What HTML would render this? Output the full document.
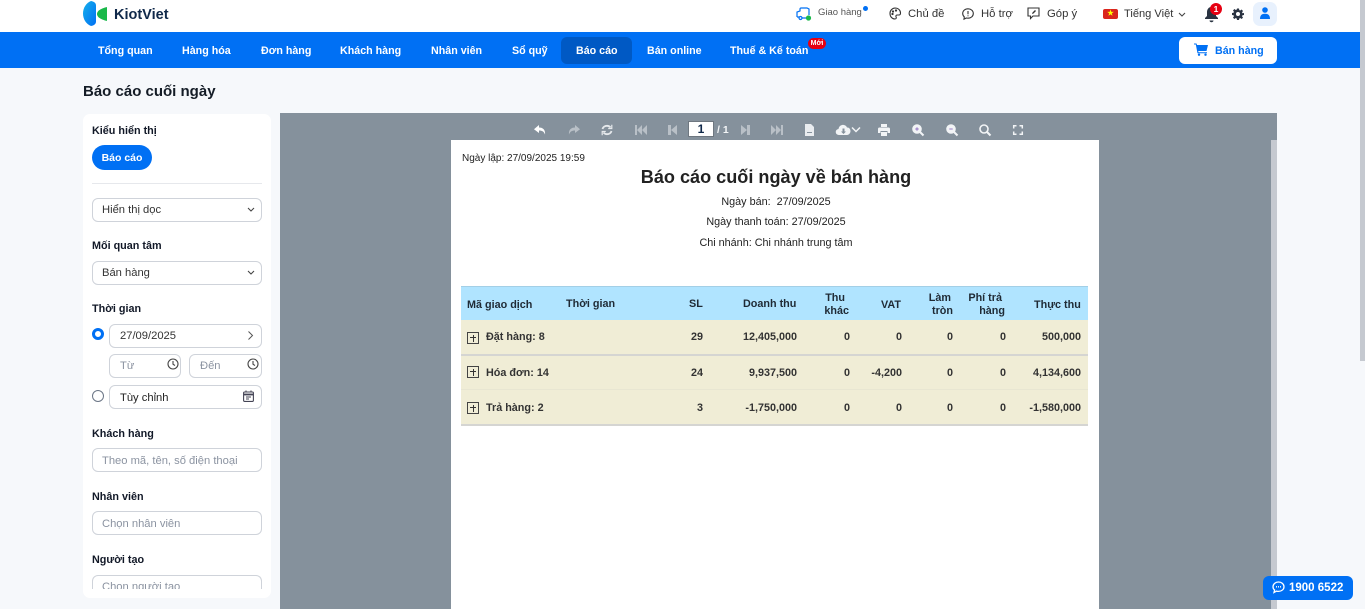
<!DOCTYPE html>
<html><head><meta charset="utf-8"><style>
*{box-sizing:border-box}
html,body{margin:0;padding:0;width:1365px;height:609px;overflow:hidden;background:#f6f8fb;font-family:"Liberation Sans","Noto Sans CJK SC",sans-serif;color:#1c2430}
.a{position:absolute;white-space:nowrap}
.nav{font-size:10.7px;font-weight:700;color:#fff;top:45px;line-height:13px}
.top{font-size:11.3px;color:#333;top:8px;line-height:13px}
.lab{font-size:10.8px;font-weight:700;color:#111827;left:92px;line-height:13px}
.inp{position:absolute;background:#fff;border:1px solid #cfd3da;border-radius:6px;height:24px;font-size:11.2px;line-height:23px;padding-left:9px;color:#333;white-space:nowrap;overflow:hidden}
.ph{color:#8b93a1}
.r{position:absolute;font-size:10.8px;line-height:13px;color:#333;text-align:right;white-space:nowrap;font-weight:700}
.h{color:#1f2a35}
.rowbg{position:absolute;left:461px;width:627px;background:#f0edd6}
.box{position:absolute;left:467px;width:12px;height:12px;border:1px solid #444}
.box:before{content:"";position:absolute;left:2px;top:4px;width:6px;height:1px;background:#333}
.box:after{content:"";position:absolute;left:4.500px;top:1.500px;width:1px;height:7px;background:#333}
svg{position:absolute;overflow:visible}
</style></head><body>
<!-- top bar -->
<div class="a" style="left:0;top:0;width:1365px;height:32px;background:#fff"></div>
<svg style="left:83px;top:1px" width="26" height="25" viewBox="0 0 26 25"><defs><linearGradient id="g" x1="0" y1="0" x2="1" y2="1"><stop offset="0" stop-color="#15b0ea"/><stop offset="1" stop-color="#0070f4"/></linearGradient></defs><path d="M8 0C3 2 0 7 0 12.500S3 23 8 25c3-.5 5-2 5-4.500V4.500C13 2 11 .5 8 0z" fill="url(#g)"/><path d="M24 6v14c-4-1-10-3-10-7s6-6 10-7z" fill="#19b84a"/></svg>
<div class="a" style="left:114px;top:7px;font-size:14.500px;line-height:17px;font-weight:700;color:#10294a">KiotViet</div>

<svg style="left:796px;top:7px" width="16" height="14" viewBox="0 0 16 14" fill="none" stroke="#0070f4" stroke-width="1.2"><path d="M1 10V5l3-1V2a1 1 0 011-1h6l2 1v6"/><path d="M1 10h2M6 11h4"/><circle cx="4.500" cy="11" r="1.500"/><circle cx="12.500" cy="11" r="2" fill="#19b84a" stroke="#19b84a"/></svg>
<div class="a" style="left:818px;top:7px;font-size:9.500px;line-height:12px;color:#555">Giao hàng</div>
<div class="a" style="left:863px;top:6px;width:5px;height:5px;border-radius:50%;background:#0070f4"></div>
<svg style="left:889px;top:7px" width="12" height="13" viewBox="0 0 12 13" fill="none" stroke="#333" stroke-width="1.100"><path d="M6 1a5.300 5.300 0 00-5 5.500C1 9.500 3 12 6 12c1.500 0 1.500-1.500 1-2.200-.5-1 .2-1.800 1.300-1.800H10c1 0 1.500-.8 1.500-2C11.500 3 9 1 6 1z"/><circle cx="4" cy="4.500" r=".6" fill="#333"/><circle cx="7" cy="3.500" r=".6" fill="#333"/><circle cx="3.500" cy="7" r=".6" fill="#333"/></svg>
<div class="a top" style="left:908px">Chủ đề</div>
<svg style="left:962px;top:8px" width="12" height="12" viewBox="0 0 12 12" fill="none" stroke="#333" stroke-width="1.100"><path d="M6 .8c3 0 5.300 2 5.300 4.700S9 10.200 6 10.200c-.6 0-1.200-.1-1.700-.2L2 11.200l.3-2.300C1.200 8 .7 6.800.7 5.500.7 2.800 3 .8 6 .8z"/><path d="M6 3v3.200M6 7.400v.9"/></svg>
<div class="a top" style="left:981px">Hỗ trợ</div>
<svg style="left:1027px;top:7px" width="13" height="13" viewBox="0 0 13 13" fill="none" stroke="#333" stroke-width="1.100"><path d="M1 1h11v8H6l-2.500 2.500V9H1z"/><path d="M5 7l.5-1.500L8 3l1 1-2.500 2.500z" fill="#333" stroke="none"/></svg>
<div class="a top" style="left:1047px">Góp ý</div>
<div class="a" style="left:1103px;top:9px;width:15px;height:10px;background:#da251d;border-radius:2px;color:#ff0;font-size:7px;line-height:10px;text-align:center">★</div>
<div class="a top" style="left:1124px;font-size:11.100px">Tiếng Việt</div>
<svg style="left:1178px;top:12px" width="8" height="5" viewBox="0 0 8 5" fill="none" stroke="#444" stroke-width="1.100"><path d="M1 1l3 3 3-3"/></svg>
<svg style="left:1204px;top:5px" width="15" height="18" viewBox="0 0 15 18" fill="#2a3342"><path d="M7.500 2C4.500 2 3 4.500 3 7v4l-2 2v1h13v-1l-2-2V7c0-2.500-1.500-5-4.500-5z"/><path d="M5.500 15.500h4c0 1-1 1.800-2 1.800s-2-.8-2-1.800z"/></svg>
<div class="a" style="left:1210px;top:3px;width:12px;height:12px;border-radius:50%;background:#e60012;color:#fff;font-size:8.500px;line-height:12px;text-align:center;font-weight:700">1</div>
<svg style="left:1232px;top:8px" width="12" height="12" viewBox="0 0 24 24" fill="#2a3342"><path fill-rule="evenodd" d="M10 1h4l.6 3.200 1.900.8 2.700-1.900 2.800 2.800-1.900 2.700.8 1.900L24 10v4l-3.100.6-.8 1.900 1.900 2.700-2.800 2.800-2.700-1.900-1.900.8L14 24h-4l-.6-3.100-1.900-.8-2.700 1.900L2 19.200l1.900-2.700-.8-1.900L0 14v-4l3.100-.5.8-1.900L2 4.900l2.800-2.800 2.700 1.900 1.900-.8zM12 8a4 4 0 100 8 4 4 0 000-8z"/></svg>
<div class="a" style="left:1253px;top:2px;width:24px;height:24px;border-radius:7px;background:#e8f1fd"></div>
<svg style="left:1260px;top:7px" width="10" height="12" viewBox="0 0 10 12" fill="#0070f4"><circle cx="5" cy="3" r="2.800"/><path d="M0 12c0-4 2-5.300 5-5.300S10 8 10 12z"/></svg>

<!-- nav -->
<div class="a" style="left:0;top:32px;width:1365px;height:36px;background:#0070f4"></div>
<div class="a" style="left:561px;top:37px;width:71px;height:27px;background:#0059c4;border-radius:6px"></div>
<div class="a nav" style="left:98px">Tổng quan</div>
<div class="a nav" style="left:182px">Hàng hóa</div>
<div class="a nav" style="left:261px">Đơn hàng</div>
<div class="a nav" style="left:340px">Khách hàng</div>
<div class="a nav" style="left:431px">Nhân viên</div>
<div class="a nav" style="left:512px">Sổ quỹ</div>
<div class="a nav" style="left:576px">Báo cáo</div>
<div class="a nav" style="left:647px">Bán online</div>
<div class="a nav" style="left:730px">Thuế &amp; Kế toán</div>
<div class="a" style="left:808px;top:38px;width:18px;height:11px;background:#e60012;border-radius:6px;color:#fff;font-size:7px;line-height:11px;text-align:center;font-weight:700">Mới</div>
<div class="a" style="left:1179px;top:37px;width:98px;height:27px;background:#fff;border-radius:6px"></div>
<svg style="left:1194px;top:43px" width="14" height="13" viewBox="0 0 14 13" fill="#0070f4"><path d="M0 .5h2.500l.5 1.500h11l-1.500 6H4.200l.3 1.200H13v1H3.500L1.800 1.500H0z"/><circle cx="5" cy="11.700" r="1.200"/><circle cx="11.500" cy="11.700" r="1.200"/></svg>
<div class="a nav" style="left:1215px;color:#0070f4">Bán hàng</div>

<div class="a" style="left:83px;top:83px;font-size:15px;line-height:18px;font-weight:700;color:#141c26">Báo cáo cuối ngày</div>

<!-- sidebar -->
<div class="a" style="left:83px;top:114px;width:188px;height:484px;background:#fff;border-radius:7px"></div>
<div class="a" style="left:83px;top:114px;width:188px;height:475px;overflow:hidden">
<div style="position:absolute;left:-83px;top:-114px;width:271px;height:589px">
<div class="a lab" style="top:125px">Kiểu hiển thị</div>
<div class="a" style="left:92px;top:145px;width:60px;height:25px;border-radius:13px;background:#0070f4;color:#fff;font-size:10.500px;font-weight:700;line-height:26px;text-align:center">Báo cáo</div>
<div class="a" style="left:92px;top:183px;width:170px;height:1px;background:#e6e8ec"></div>
<div class="inp" style="left:92px;top:198px;width:170px">Hiển thị dọc</div>
<svg style="left:247px;top:207px" width="8" height="5" viewBox="0 0 8 5" fill="none" stroke="#444" stroke-width="1.100"><path d="M1 1l3 3 3-3"/></svg>
<div class="a lab" style="top:240px">Mối quan tâm</div>
<div class="inp" style="left:92px;top:261px;width:170px">Bán hàng</div>
<svg style="left:247px;top:270px" width="8" height="5" viewBox="0 0 8 5" fill="none" stroke="#444" stroke-width="1.100"><path d="M1 1l3 3 3-3"/></svg>
<div class="a lab" style="top:303px">Thời gian</div>
<div class="a" style="left:92px;top:328px;width:12px;height:12px;border-radius:50%;border:3px solid #0070f4;background:#fff"></div>
<div class="inp" style="left:109px;top:324px;width:153px;padding-left:10px">27/09/2025</div>
<svg style="left:248px;top:331px" width="5" height="9" viewBox="0 0 5 9" fill="none" stroke="#555" stroke-width="1"><path d="M.5 .5l4 4-4 4"/></svg>
<div class="inp ph" style="left:109px;top:354px;width:72px;padding-left:10px">Từ</div>
<div class="inp ph" style="left:189px;top:354px;width:73px;padding-left:10px">Đến</div>
<svg style="left:167px;top:358px" width="12" height="12" viewBox="0 0 12 12" fill="none" stroke="#444" stroke-width="1.100"><circle cx="6" cy="6" r="5"/><path d="M6 3v3.200l2 1.300"/></svg>
<svg style="left:247px;top:358px" width="12" height="12" viewBox="0 0 12 12" fill="none" stroke="#444" stroke-width="1.100"><circle cx="6" cy="6" r="5"/><path d="M6 3v3.200l2 1.300"/></svg>
<div class="a" style="left:92px;top:390px;width:12px;height:12px;border-radius:50%;border:1px solid #6b7686;background:#fff"></div>
<div class="inp" style="left:109px;top:385px;width:153px;color:#222;line-height:24px;padding-left:10px">Tùy chỉnh</div>
<svg style="left:243px;top:390px" width="11" height="12" viewBox="0 0 11 12" fill="none" stroke="#445" stroke-width="1.100"><rect x=".6" y="2" width="9.800" height="9.400" rx="1"/><path d="M.6 4.500h9.800" stroke-width="1.800"/><path d="M3 .5v2M8 .5v2M3 7h5M3 9h3"/></svg>
<div class="a lab" style="top:428px">Khách hàng</div>
<div class="inp ph" style="left:92px;top:448px;width:170px;line-height:24px">Theo mã, tên, số điện thoại</div>
<div class="a lab" style="top:491px">Nhân viên</div>
<div class="inp ph" style="left:92px;top:511px;width:170px;line-height:24px">Chọn nhân viên</div>
<div class="a lab" style="top:554px">Người tạo</div>
<div class="inp ph" style="left:92px;top:575px;width:170px;height:14px;border-bottom:0;border-radius:6px 6px 0 0">Chọn người tạo</div>
</div></div>

<!-- viewer -->
<div class="a" style="left:280px;top:113px;width:997px;height:496px;background:#85919c"></div>
<div class="a" style="left:1271px;top:140px;width:6px;height:469px;background:#c5c9d0"></div>
<svg style="left:534px;top:124px" width="13" height="12" viewBox="0 0 13 12" fill="#fff"><path d="M5 1L0 5.200 5 9V6.500c3 0 5 1 6 4 .5-4-1.500-7-6-7z"/></svg>
<svg style="left:567px;top:124px" width="13" height="12" viewBox="0 0 13 12" fill="#b9c0c7"><path d="M8 1l5 4.200L8 9V6.500c-3 0-5 1-6 4-.5-4 1.500-7 6-7z"/></svg>
<svg style="left:601px;top:124px" width="12" height="12" viewBox="0 0 12 12" fill="none" stroke="#e6e9ec" stroke-width="1.800"><path d="M1.500 5C2 3 4 1.800 6 1.800c1.500 0 2.700.6 3.500 1.700M10.500 7C10 9 8 10.200 6 10.200c-1.500 0-2.700-.6-3.500-1.700"/><path d="M10.800 .8v3.700H7.200M1.200 11.200V7.500h3.600" stroke-width="1.200"/></svg>
<svg style="left:635px;top:125px" width="12" height="10" viewBox="0 0 12 10" fill="#b9c0c7"><path d="M0 0h2v10H0zM7 0v10L2 5zM12 0v10L7 5z"/></svg>
<svg style="left:668px;top:125px" width="9" height="10" viewBox="0 0 9 10" fill="#b9c0c7"><path d="M0 0h3v10H0zM9 0v10L3 5z"/></svg>
<div class="a" style="left:688px;top:121px;width:26px;height:16px;background:#fff;border:1px solid #6e7780;font-size:12px;font-weight:700;line-height:15px;text-align:center;color:#10294a">1</div>
<div class="a" style="left:717px;top:124px;font-size:10.500px;font-weight:700;line-height:13px;color:#f3f5f7">/ 1</div>
<svg style="left:741px;top:125px" width="9" height="10" viewBox="0 0 9 10" fill="#b9c0c7"><path d="M9 0H6v10h3zM0 0v10l6-5z"/></svg>
<svg style="left:771px;top:125px" width="12" height="10" viewBox="0 0 12 10" fill="#b9c0c7"><path d="M12 0h-2v10h2zM5 0v10l5-5zM0 0v10l5-5z"/></svg>
<svg style="left:805px;top:124px" width="9" height="12" viewBox="0 0 9 12" fill="#e9ecef"><path d="M0 0h6l3 3v9H0z"/><path d="M2 8h5v1H2z" fill="#85919c"/></svg>
<svg style="left:836px;top:124px" width="25" height="12" viewBox="0 0 25 12"><path d="M3 11a3 3 0 01-.5-6C3 2 5.500 .5 8 1c1.500.3 2.500 1.300 3 2.500 2-.3 3.500 1.500 3.500 3.500s-1.500 4-3.500 4z" fill="#f2f4f6"/><path d="M6.500 4.500h2v3H10L7.500 10 5 7.500h1.500z" fill="#85919c"/><path d="M16 3.500l4 4 4-4" fill="none" stroke="#f2f4f6" stroke-width="1.500"/></svg>
<svg style="left:878px;top:124px" width="12" height="12" viewBox="0 0 12 12" fill="#f2f4f6"><path d="M3 0h6v3H3zM1.500 3.500h9A1.500 1.500 0 0112 5v4H9.500V7h-7v2H0V5a1.500 1.500 0 011.500-1.500zM3 8h6v4H3z"/></svg>
<svg style="left:912px;top:124px" width="12" height="12" viewBox="0 0 12 12" fill="none" stroke="#f2f4f6" stroke-width="2"><circle cx="5" cy="5" r="3.800" fill="#f2f4f6"/><path d="M8 8l3.500 3.500"/><path d="M5 3.300v3.400M3.300 5h3.400" stroke-width=".9" stroke="#8f6fc0"/></svg>
<svg style="left:946px;top:124px" width="12" height="12" viewBox="0 0 12 12" fill="none" stroke="#f2f4f6" stroke-width="2"><circle cx="5" cy="5" r="3.800" fill="#f2f4f6"/><path d="M8 8l3.500 3.500"/><path d="M3.300 5h3.400" stroke-width=".9" stroke="#8f6fc0"/></svg>
<svg style="left:979px;top:124px" width="12" height="12" viewBox="0 0 12 12" fill="none" stroke="#f2f4f6" stroke-width="1.600"><circle cx="5" cy="5" r="4"/><path d="M8 8l3.500 3.500" stroke-width="2"/></svg>
<svg style="left:1013px;top:125px" width="10" height="10" viewBox="0 0 10 10" fill="none" stroke="#f2f4f6" stroke-width="1.500"><path d="M.7 3.500V.7h2.800M6.500 .7h2.800v2.800M9.300 6.500v2.800H6.500M3.500 9.300H.7V6.500"/></svg>

<!-- paper -->
<div class="a" style="left:451px;top:140px;width:648px;height:469px;background:#fff"></div>
<div class="a" style="left:462px;top:153px;font-size:10px;line-height:12px;color:#222">Ngày lập: 27/09/2025 19:59</div>
<div class="a" style="left:451px;top:166px;width:650px;text-align:center;font-size:18.100px;line-height:22px;font-weight:700;color:#222">Báo cáo cuối ngày về bán hàng</div>
<div class="a" style="left:451px;top:196px;width:650px;text-align:center;font-size:10.800px;line-height:13px;color:#222">Ngày bán:&nbsp; 27/09/2025</div>
<div class="a" style="left:451px;top:216px;width:650px;text-align:center;font-size:10.800px;line-height:13px;color:#222">Ngày thanh toán: 27/09/2025</div>
<div class="a" style="left:451px;top:237px;width:650px;text-align:center;font-size:10.800px;line-height:13px;color:#222">Chi nhánh: Chi nhánh trung tâm</div>

<!-- table -->
<div class="a" style="left:461px;top:286px;width:627px;height:34px;background:#b0e4ff;border-top:1px solid #a3cfe6"></div>
<div class="rowbg" style="top:320px;height:34px"></div>
<div class="a" style="left:461px;top:354px;width:627px;height:2px;background:#d5d5d2"></div>
<div class="rowbg" style="top:356px;height:33px"></div>
<div class="a" style="left:461px;top:389px;width:627px;height:1px;background:#e8e6d2"></div>
<div class="rowbg" style="top:390px;height:34px"></div>
<div class="a" style="left:461px;top:424px;width:627px;height:2px;background:#d5d5d2"></div>

<div class="r h" style="left:467px;top:299px">Mã giao dịch</div>
<div class="r h" style="left:566px;top:298px">Thời gian</div>
<div class="r h" style="left:689px;top:298px">SL</div>
<div class="r h" style="left:743px;top:298px">Doanh thu</div>
<div class="r h" style="left:820px;top:292px;width:29px;line-height:13px"><span style="margin-right:4px">Thu</span><br>khác</div>
<div class="r h" style="left:881px;top:299px">VAT</div>
<div class="r h" style="left:920px;top:292px;width:33px;line-height:13px"><span style="margin-right:2px">Làm</span><br>tròn</div>
<div class="r h" style="left:960px;top:292px;width:45px;line-height:13px"><span style="margin-right:3px">Phí trả</span><br>hàng</div>
<div class="r h" style="left:1034px;top:299px">Thực thu</div>

<div class="box" style="top:332px"></div>
<div class="box" style="top:366px"></div>
<div class="box" style="top:402px"></div>
<div class="r" style="left:486px;top:331px">Đặt hàng: 8</div>
<div class="r" style="left:486px;top:367px">Hóa đơn: 14</div>
<div class="r" style="left:486px;top:402px">Trả hàng: 2</div>

<div class="r" style="right:662px;top:331px">29</div><div class="r" style="right:662px;top:367px">24</div><div class="r" style="right:662px;top:402px">3</div>
<div class="r" style="right:568px;top:331px">12,405,000</div><div class="r" style="right:568px;top:367px">9,937,500</div><div class="r" style="right:568px;top:402px">-1,750,000</div>
<div class="r" style="right:515px;top:331px">0</div><div class="r" style="right:515px;top:367px">0</div><div class="r" style="right:515px;top:402px">0</div>
<div class="r" style="right:463px;top:331px">0</div><div class="r" style="right:463px;top:367px">-4,200</div><div class="r" style="right:463px;top:402px">0</div>
<div class="r" style="right:412px;top:331px">0</div><div class="r" style="right:412px;top:367px">0</div><div class="r" style="right:412px;top:402px">0</div>
<div class="r" style="right:359px;top:331px">0</div><div class="r" style="right:359px;top:367px">0</div><div class="r" style="right:359px;top:402px">0</div>
<div class="r" style="right:284px;top:331px">500,000</div><div class="r" style="right:284px;top:367px">4,134,600</div><div class="r" style="right:284px;top:402px">-1,580,000</div>

<!-- page scrollbar -->
<div class="a" style="left:1360px;top:0;width:5px;height:361px;background:#c5c9d0"></div>

<!-- hotline -->
<div class="a" style="left:1263px;top:576px;width:90px;height:24px;background:#0070f4;border-radius:6px"></div>
<svg style="left:1272px;top:581px" width="13" height="13" viewBox="0 0 13 13" fill="none" stroke="#fff" stroke-width="1.300"><path d="M6.500 1c3 0 5.500 2 5.500 4.700s-2.500 4.700-5.500 4.700c-.7 0-1.300-.1-1.900-.3L2 11.500l.6-2.500C1.600 8.200 1 7 1 5.700 1 3 3.500 1 6.500 1z"/><path d="M4 5.800h5" stroke-dasharray="1 1"/></svg>
<div class="a" style="left:1289px;top:582px;font-size:11.500px;line-height:13px;font-weight:700;color:#fff">1900 6522</div>
</body></html>
